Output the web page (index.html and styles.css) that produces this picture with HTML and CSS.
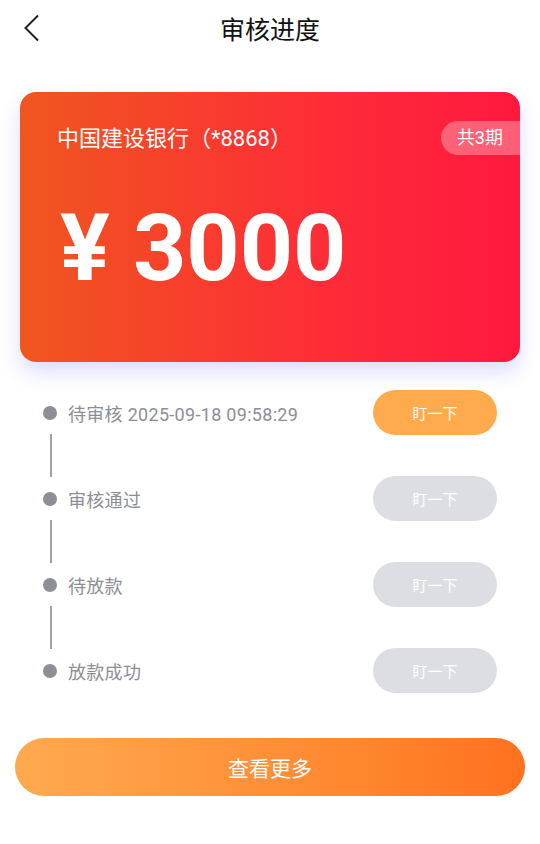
FILE: index.html
```html
<!DOCTYPE html>
<html lang="zh-CN">
<head>
    <meta charset="UTF-8">
    <meta name="viewport" content="width=device-width, initial-scale=1.0">
    <title>审核进度</title>
    <link rel="stylesheet" href="styles.css">
</head>
<body>
    <header class="topbar">
        <a class="back" href="#">
            <svg width="17" height="28" viewBox="0 0 17 28"><path d="M15 1.5 L2.5 14 L15 26.5" fill="none" stroke="#222" stroke-width="2"/></svg>
        </a>
        <h1>审核进度</h1>
        <span></span>
    </header>

    <section class="card">
        <div class="card-top">
            <p class="bank">中国建设银行（*8868）</p>
            <span class="period">共3期</span>
        </div>
        <p class="amount">¥ 3000</p>
    </section>

    <section class="steps">
        <div class="step">
            <i class="dot"></i>
            <span class="label">待审核 2025-09-18 09:58:29</span>
            <button class="poke active">盯一下</button>
        </div>
        <div class="line"></div>
        <div class="step">
            <i class="dot"></i>
            <span class="label">审核通过</span>
            <button class="poke">盯一下</button>
        </div>
        <div class="line"></div>
        <div class="step">
            <i class="dot"></i>
            <span class="label">待放款</span>
            <button class="poke">盯一下</button>
        </div>
        <div class="line"></div>
        <div class="step">
            <i class="dot"></i>
            <span class="label">放款成功</span>
            <button class="poke">盯一下</button>
        </div>
    </section>

    <button class="more">查看更多</button>
</body>
</html>
```

FILE: styles.css
```css
body {
    margin: 0;
    background: #fff;
    font-family: Roboto, "Noto Sans CJK SC", sans-serif;
    color: #222;
}
.topbar {
    display: grid;
    grid-template-columns: 60px 1fr 60px;
    align-items: center;
    height: 56px;
}
.back {
    display: flex;
    padding-left: 23px;
}
.topbar h1 {
    margin: 0;
    text-align: center;
    font-size: 25px;
    font-weight: 400;
    color: #111;
}
.card {
    margin: 36px 20px 0;
    height: 270px;
    border-radius: 16px;
    background: linear-gradient(90deg, #f0561f, #fd2d37 60%, #ff183f);
    box-shadow: 0 10px 20px rgba(90, 100, 245, 0.22);
    color: #fff;
    padding-left: 37px;
    box-sizing: border-box;
}
.card-top {
    display: flex;
    align-items: center;
    justify-content: space-between;
    padding-top: 29px;
}
.bank {
    margin: -4px 0 0;
    font-size: 22px;
}
.period {
    height: 34px;
    line-height: 34px;
    padding: 0 17px 0 16px;
    border-radius: 17px 0 0 17px;
    background: rgba(255, 255, 255, 0.3);
    font-size: 18px;
}
.amount {
    margin: 47px 0 0 3px;
    font-size: 93px;
    font-weight: 700;
    line-height: 1;
    letter-spacing: 0;
}
.steps {
    margin: 28px 43px 0;
}
.step {
    display: flex;
    align-items: center;
    height: 45px;
}
.dot {
    width: 14px;
    height: 14px;
    border-radius: 50%;
    background: #8d8f96;
    margin-right: 11px;
}
.label {
    font-size: 18px;
    letter-spacing: 0.3px;
    color: #8c8e96;
}
.poke {
    margin-left: auto;
    width: 124px;
    height: 45px;
    border: none;
    border-radius: 23px;
    background: #dcdee4;
    color: #fff;
    font-family: inherit;
    font-size: 15px;
}
.poke.active {
    background: #ffab4d;
}
.line {
    height: 43px;
    width: 2px;
    margin: -1px 0 -1px 7px;
    background: #a0a1a6;
}
.more {
    display: block;
    margin: 45px 15px 0;
    width: 510px;
    height: 58px;
    border: none;
    border-radius: 29px;
    background: linear-gradient(90deg, #ffaa50, #ff8d35 55%, #ff7120);
    color: #fff;
    font-family: inherit;
    font-size: 21px;
}
```
